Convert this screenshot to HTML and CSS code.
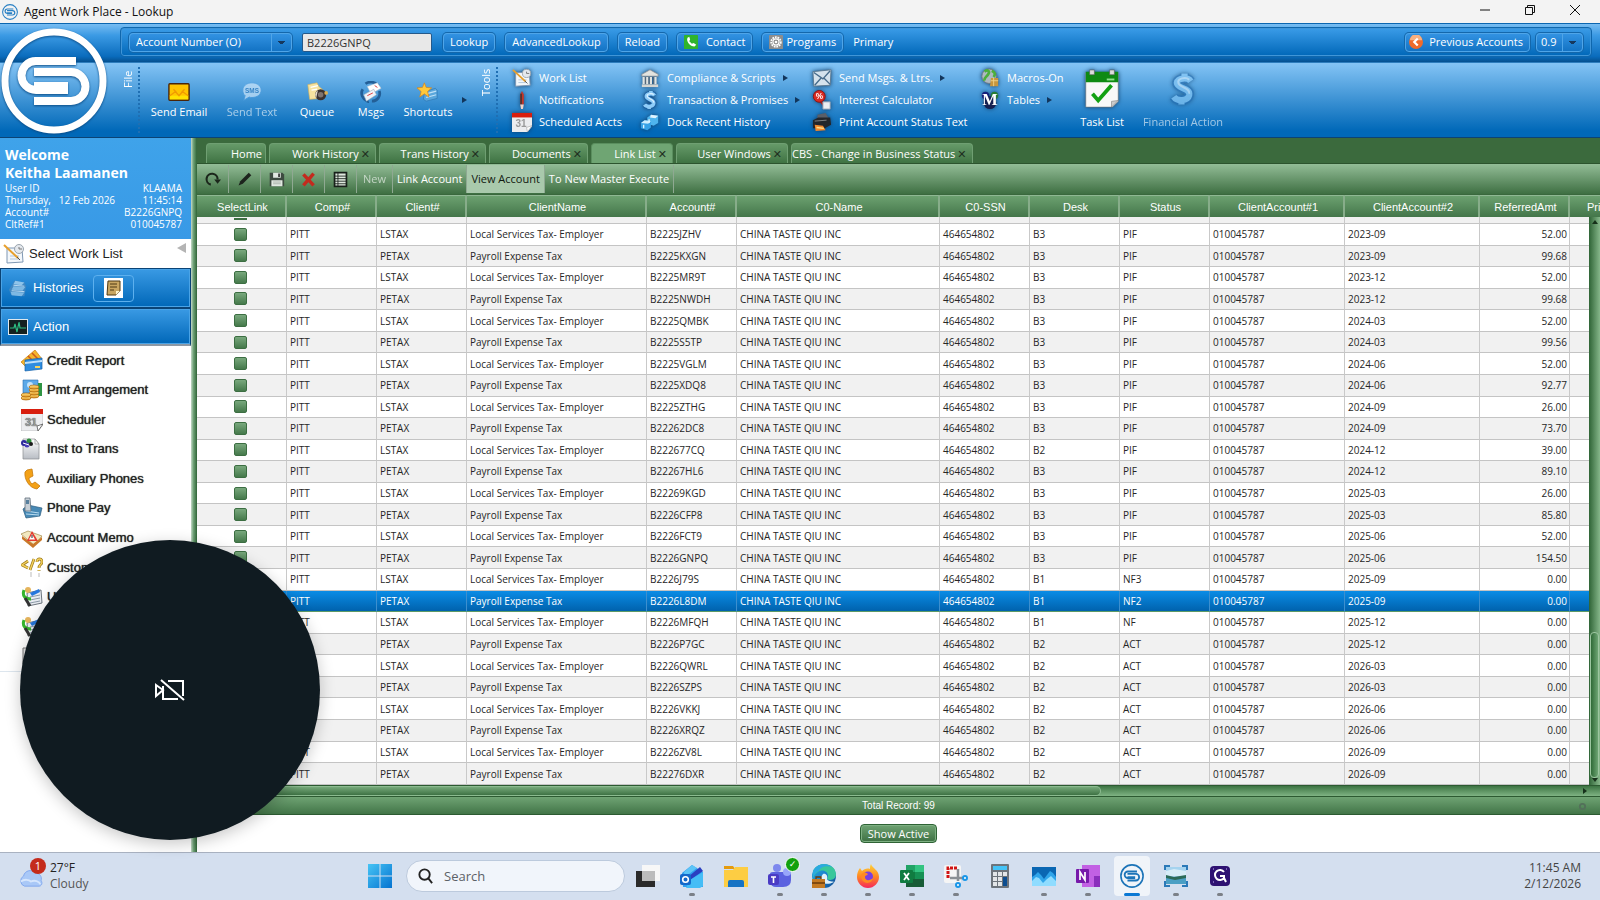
FILE: index.html
```html
<!DOCTYPE html>
<html lang="en">
<head>
<meta charset="utf-8">
<title>Agent Work Place - Lookup</title>
<link rel="stylesheet" href="styles.css">
</head>
<body>
<svg class="defs" aria-hidden="true">
  <defs>
    <linearGradient id="gWin" x1="0" y1="0" x2="1" y2="1"><stop offset="0" stop-color="#46c4f5"/><stop offset="1" stop-color="#0573d0"/></linearGradient>
    <linearGradient id="gGrey" x1="0" y1="0" x2="0" y2="1"><stop offset="0" stop-color="#fff"/><stop offset="1" stop-color="#b9bdc4"/></linearGradient>
    <linearGradient id="gEdge" x1="0" y1="0" x2="1" y2="1"><stop offset="0" stop-color="#2bb5d8"/><stop offset=".5" stop-color="#1a7fce"/><stop offset="1" stop-color="#114a8b"/></linearGradient>
    <linearGradient id="gFox" x1="0" y1="0" x2="0" y2="1"><stop offset="0" stop-color="#ffd43a"/><stop offset=".5" stop-color="#ff8a22"/><stop offset="1" stop-color="#f5275c"/></linearGradient>
    <linearGradient id="gGold" x1="0" y1="0" x2="0" y2="1"><stop offset="0" stop-color="#ffe287"/><stop offset="1" stop-color="#e3951c"/></linearGradient>
  </defs>
  <symbol id="swirl" viewBox="0 0 106 106">
    <circle cx="53" cy="53" r="49" fill="none" stroke="currentColor" stroke-width="7"/>
    <path d="M75 33H35a14 14 0 0 0 0 29h32M33 44h37a14 14 0 0 1 0 29H33M33 58h34" fill="none" stroke="currentColor" stroke-width="8"/>
  </symbol>
  <symbol id="mail" viewBox="0 0 24 20"><rect x="1" y="1" width="22" height="18" rx="1" fill="#ffc400" stroke="#4a2408" stroke-width="1.5"/><path d="M2 14h20v4H2z" fill="#ffe100"/><path d="M2 14l7-5M22 14l-7-5M6 7l6 7 6-7" fill="none" stroke="#f09a00" stroke-width="1.4"/></symbol>
  <symbol id="queue" viewBox="0 0 24 22"><path d="M2 3l10-2 2 4 5 4-3 9-12 1z" fill="#f6e3a0" stroke="#d6b25a" stroke-width=".7"/><path d="M5 6l8-2M6 9l6-1" stroke="#fff" stroke-width="1.500"/><circle cx="16" cy="14" r="6" fill="#3a3230"/><path d="M10 14a6 6 0 0 1 3-5l-2 9z" fill="#e6dccb"/><circle cx="16" cy="14" r="3" fill="#7e7470"/><circle cx="22" cy="12" r="2" fill="#dbaf54"/></symbol>
  <symbol id="msgs" viewBox="0 0 24 24"><path d="M6 3c4-3 10-2 13 1l-3 1M3 9c-3 5 0 11 5 13l-1-4M21 11c2 5-2 11-8 11" fill="none" stroke="#235f97" stroke-width="3"/><path d="M8 6l11-4 4 6-11 6z" fill="#fff" stroke="#b6c4d2" stroke-width=".6"/><path d="M4 15l11-6 3 6-11 7z" fill="#eef3f8" stroke="#93a6b8" stroke-width=".6"/><path d="M16 5l3 2M8 16l6-3" stroke="#d33" stroke-width="1"/></symbol>
  <symbol id="shortcuts" viewBox="0 0 24 22"><path d="M8 11l12-4 2 2v9l-12 3-3-2z" fill="#5aa7dc" stroke="#2f79b5" stroke-width=".8"/><path d="M10 13l11-3M10 17l11-3" stroke="#bfe1f7" stroke-width="1.4"/><path d="M8 1l2 5 6 .5-4.500 4 1.500 6L8 13l-5 3.500 1.500-6L0 6.500 6 6z" fill="#ffc93a" stroke="#d9861a" stroke-width=".8"/></symbol>
  <symbol id="worklist" viewBox="0 0 22 22"><path d="M4 5h15l1 14-16 1z" fill="#f3f7fb" stroke="#7e97b3"/><circle cx="16" cy="6" r="4.500" fill="#e4e8ed" stroke="#9aa4ae"/><path d="M16 4v2h3" stroke="#777" fill="none"/><path d="M7 13h9M7 16h9" stroke="#b3c6dc"/><path d="M1 2l14 13" stroke="#e8a02c" stroke-width="2"/><path d="M14 14l3 3" stroke="#555"/></symbol>
  <symbol id="pen" viewBox="0 0 22 22"><path d="M9 5l2-4 2 4v11H9z" fill="#c3352a"/><path d="M10 4v12" stroke="#333" stroke-width="1.500"/><path d="M9 16h4l-1 5h-2z" fill="#f2d3c9"/></symbol>
  <symbol id="bank" viewBox="0 0 22 22"><path d="M2 7l9-5 9 5v2H2z" fill="#e3e3df" stroke="#8b8f94" stroke-width=".8"/><path d="M4 10v8M8 10v8M12 10v8M17 10v8" stroke="#e3e3df" stroke-width="2.500"/><path d="M6 10v8M10 10v8M15 10v8" stroke="#5f6a76"/><path d="M2 18h18v3H2z" fill="#d6d6d2"/></symbol>
  <symbol id="dollar" viewBox="0 0 22 22"><path d="M16 6c-2-3-9-2-9 1 0 4 9 3 8 8-1 4-8 4-10 1M12 1v4M10 17v4" fill="none" stroke="#1d62a4" stroke-width="6"/><path d="M16 6c-2-3-9-2-9 1 0 4 9 3 8 8-1 4-8 4-10 1M12 1v4M10 17v4" fill="none" stroke="#8fcdf8" stroke-width="4"/><path d="M15 5c-2-2-8-1-7 2 0 3 8 3 7 7" fill="none" stroke="#dcf1ff" stroke-width="1.300"/></symbol>
  <symbol id="dock" viewBox="0 0 22 22"><path d="M8 6l4-3 8 1v8l-5 3-7-2z" fill="#4eb4ee"/><path d="M12 3l8 1-3 3-6-1z" fill="#dff4ff"/><path d="M1 12l4-3 7 1v7l-4 3-7-2z" fill="#37a2e6"/><path d="M5 9l7 1-3 3-8-1z" fill="#cceeff"/><path d="M10 8v4M4 14v4" stroke="#dff4ff" stroke-width="1.500"/></symbol>
  <symbol id="envelope" viewBox="0 0 22 22"><path d="M1 4l20-2-1 17-18 1z" fill="#d5e2ec" stroke="#5b7890"/><path d="M2 5l10 7 8-9M3 19l7-8M20 18l-7-7" fill="none" stroke="#476b8a" stroke-width="1.500"/></symbol>
  <symbol id="printer" viewBox="0 0 22 22"><path d="M6 3l9-2 4 7H6z" fill="#5a5f68"/><path d="M1 9l6-3h13l1 8-7 4H1z" fill="#23262b"/><path d="M3 10l13-1" stroke="#888"/><path d="M3 14l9 1 3 5-11 1z" fill="#f2882e"/><path d="M5 17l8 1" stroke="#ffe28a" stroke-width="1.500"/></symbol>
  <symbol id="globe" viewBox="0 0 22 22"><circle cx="10" cy="9" r="8" fill="#aeb9bf" stroke="#6d7b86"/><path d="M5 4c4-3 6 0 4 3s-5 4-4 7M13 3c4 2 4 4 2 7" fill="none" stroke="#4caf3c" stroke-width="3"/><path d="M12 11h8v9h-9z" fill="#c8963c"/><path d="M12 14h8M15 11v9" stroke="#f1d287"/></symbol>
  <symbol id="task" viewBox="0 0 38 42"><path d="M2 4h34v30l-6 6H2z" fill="#f8f8f8" stroke="#777" stroke-width=".6"/><path d="M2 3h34v11H2z" fill="#0e8a12"/><path d="M6 1h5v5H6zM27 1h5v5h-5z" fill="#ddd" stroke="#555" stroke-width=".6"/><path d="M24 11h8" stroke="#8fe08c" stroke-width="2"/><path d="M9 26l6 7 14-16" fill="none" stroke="#12a012" stroke-width="4"/><path d="M36 33l-7 7v-6z" fill="#ccc" stroke="#777" stroke-width=".6"/></symbol>
  <symbol id="phone" viewBox="0 0 16 16"><rect width="16" height="16" rx="1" fill="#2fb42c"/><path d="M4 3c-2 4 3 10 8 10l2-2-3-2-2 1-3-3 1-2-1-3z" fill="#fff"/></symbol>
  <symbol id="gear" viewBox="0 0 16 16"><rect width="16" height="16" rx="1" fill="#8d8d8d"/><circle cx="8" cy="8" r="5.500" fill="none" stroke="#fff" stroke-width="2" stroke-dasharray="2 1"/><circle cx="8" cy="8" r="3.500" fill="none" stroke="#fff" stroke-width="1.300"/><circle cx="8" cy="8" r="1.500" fill="#fff"/></symbol>
  <symbol id="prev" viewBox="0 0 16 16"><circle cx="8" cy="8" r="8" fill="#ef6a2a"/><path d="M1 6a7 7 0 0 1 14 0z" fill="#f8b080"/><path d="M10 4L6 8l4 4" fill="none" stroke="#fff" stroke-width="2.500"/></symbol>
  <symbol id="hist" viewBox="0 0 22 22"><path d="M7 3l11 2 2 4-2 11-14-1-3-6z" fill="#3f87c2"/><path d="M8 3l10 2-3 3-9-1z" fill="#8fc4ea"/><path d="M6 9l13 1-3 4-12-1zM3 15l15 1-3 4-11-1z" fill="#7db8e3"/><path d="M6 8l12 1M4 14l14 1" stroke="#c3e0f5"/></symbol>
  <symbol id="pulse" viewBox="0 0 20 16"><rect x=".5" y=".5" width="19" height="15" fill="#14211f" stroke="#dfe8ee"/><path d="M2 9h4l1-4 2 8 2-10 1 6h6" fill="none" stroke="#2dbd80" stroke-width="1.200"/></symbol>
  <symbol id="note" viewBox="0 0 19 20"><path d="M0 0h19v20H0z" fill="#fff"/><path d="M4 3h12v10l-4 4H3z" fill="#c9a661" stroke="#4d3815"/><path d="M6 6h7M6 9h7M6 12h4" stroke="#4d3815"/><path d="M16 13l-4 4v-4z" fill="#fff3cc"/></symbol>
  <symbol id="credit" viewBox="0 0 22 22"><path d="M0 12L14 0l7 9-14 10z" fill="#f5b52b" stroke="#c77b10" stroke-width=".7"/><path d="M7 6l8 8M11 3l9 9" stroke="#ca5a1c" stroke-width="1.500"/><path d="M4 10l17-2v11l-17 2z" fill="#2f8de0" stroke="#1863a9" stroke-width=".7"/><path d="M4 12l17-2v2l-17 2z" fill="#bfe0fa"/><path d="M14 16h5v2h-5z" fill="#f8d45e"/></symbol>
  <symbol id="coins" viewBox="0 0 22 22"><path d="M2 1h15v13H2z" fill="#5ca9e8" stroke="#2c6fb0" stroke-width=".6"/><path d="M17 4h4v13h-4z" fill="#2e9443"/><circle cx="9" cy="6" r="3" fill="#c4e3fa"/><g fill="url(#gGold)" stroke="#a8650f" stroke-width=".7"><ellipse cx="13" cy="17" rx="5" ry="2"/><ellipse cx="13" cy="14" rx="5" ry="2"/><ellipse cx="13" cy="11" rx="5" ry="2"/><ellipse cx="13" cy="8" rx="5" ry="2"/><ellipse cx="5" cy="19" rx="5" ry="2"/><ellipse cx="5" cy="16" rx="5" ry="2"/></g></symbol>
  <symbol id="inst" viewBox="0 0 22 22"><path d="M2 1h12l4 5v15H2z" fill="url(#gGrey)" stroke="#8a8d91" stroke-width=".7"/><path d="M14 1v5h4z" fill="#f7f7f7" stroke="#888" stroke-width=".6"/><circle cx="3" cy="5" r="3" fill="#2d2a9c"/><circle cx="8" cy="3" r="2.500" fill="#2f8d3d"/><circle cx="6" cy="7" r="2.500" fill="#473db8"/><circle cx="10" cy="6" r="2" fill="#1b1b1b"/><path d="M2 5l6 2" stroke="#fff"/></symbol>
  <symbol id="handset" viewBox="0 0 22 22"><path d="M4 4c-1 7 4 16 12 17l3-3-5-4-3 2c-2-2-3-4-3-6l4-2-1-7-5 1z" fill="#f3a117" stroke="#c77a0c" stroke-width=".8"/></symbol>
  <symbol id="pay" viewBox="0 0 22 22"><path d="M2 12l5-4 14 3-2 8-14 2z" fill="#4789b5" stroke="#2d5d80" stroke-width=".7"/><path d="M5 14l13 2M5 17l13 1" stroke="#b9dcf0"/><path d="M4 1h5l1 13H4z" fill="#c7cfd6" stroke="#62707c" stroke-width=".8"/><path d="M5 3h3v4H5z" fill="#58809e"/></symbol>
  <symbol id="memo" viewBox="0 0 22 22"><path d="M0 7l7-3 14 5-8 9z" fill="#f2e8c0" stroke="#a28a4b" stroke-width=".7"/><path d="M1 9l11 8 9-7v3l-9 8L1 12z" fill="#c9792a"/><path d="M11 4l6 10H6z" fill="#e53b30"/><path d="M11 7l3 5.500H8z" fill="#fff"/><path d="M11 8v3" stroke="#222"/></symbol>
  <symbol id="custom" viewBox="0 0 22 22"><path d="M7 4L1 8l6 3M13 2L9 13M16 5c0-4 5-4 5 0 0 3-3 2-3 6M18 13v1" fill="none" stroke="#9a7a1c" stroke-width="2.800"/><path d="M7 4L1 8l6 3M13 2L9 13M16 5c0-4 5-4 5 0 0 3-3 2-3 6M18 13v1" fill="none" stroke="#f3cf5b" stroke-width="1.400"/><path d="M10 15v5M18 16v4" stroke="#bbb"/></symbol>
  <symbol id="userwin" viewBox="0 0 22 22"><path d="M6 7l14-3 1 13-14 3z" fill="#e9edf2" stroke="#6e7780"/><path d="M9 11l10-2M9 14l10-2M9 17l10-2" stroke="#8c9aa8"/><circle cx="7" cy="4" r="3" fill="#e5b45c"/><path d="M9 7l9-4 1 3-8 4z" fill="#2577dd"/><path d="M3 4c-2 6 1 9 7 9" fill="none" stroke="#35b52d" stroke-width="3"/><path d="M4 12l5 8" stroke="#333" stroke-width="3"/></symbol>
  <symbol id="refresh" viewBox="0 0 20 20"><path d="M8 16a6.500 6.500 0 1 1 8-6" fill="none" stroke="#1b261b" stroke-width="2.500"/><path d="M12 10h8l-4 5z" fill="#1b261b"/></symbol>
  <symbol id="pencil" viewBox="0 0 20 20"><path d="M3 17l2-5L15 2l3 3L8 15z" fill="#1d241d"/></symbol>
  <symbol id="save" viewBox="0 0 20 20"><path d="M2 2h15l2 2v14H2z" fill="#3d4b40"/><path d="M6 2h9v6H6zM4 11h13v7H4z" fill="#e1e8e1"/><path d="M12 3h2v4h-2z" fill="#333"/><path d="M6 13h9M6 15h9" stroke="#a5aea5"/></symbol>
  <symbol id="del" viewBox="0 0 20 20"><path d="M4 4l12 13M16 3L4 17" stroke="#c42a1e" stroke-width="4"/></symbol>
  <symbol id="sheet" viewBox="0 0 20 20"><path d="M3 2h14v16H3z" fill="#dfe9df" stroke="#18201a" stroke-width="2"/><path d="M3 6h14M3 9h14M3 12h14M3 15h14M7 2v16" stroke="#18201a"/></symbol>
</svg>

<div class="app">
  <header class="titlebar">
    <svg class="title-logo"><use href="#swirl"/></svg>
    <h1>Agent Work Place - Lookup</h1>
    <div class="win-buttons">
      <button aria-label="Minimize"><svg viewBox="0 0 12 12"><path d="M1 6h10"/></svg></button>
      <button aria-label="Restore"><svg viewBox="0 0 12 12"><path d="M1.500 3.500h7v7h-7zM3.500 3V1.500H10.500v7H9"/></svg></button>
      <button aria-label="Close"><svg viewBox="0 0 12 12"><path d="M1 1l10 10M11 1L1 11"/></svg></button>
    </div>
  </header>

  <div class="top">
    <svg class="brand"><use href="#swirl"/></svg>
    <div class="lookup-row">
      <form class="lookup-bar" onsubmit="return false">
        <select class="kind" aria-label="Search field"><option>Account Number (O)</option></select>
        <input class="acct" aria-label="Account number" value="B2226GNPQ">
        <button class="pill">Lookup</button>
        <button class="pill">AdvancedLookup</button>
        <button class="pill">Reload</button>
        <button class="pill with-icon contact"><svg><use href="#phone"/></svg>Contact</button>
        <button class="pill with-icon"><svg><use href="#gear"/></svg>Programs</button>
        <span class="primary">Primary</span>
        <button class="pill with-icon prev"><svg><use href="#prev"/></svg>Previous Accounts</button>
        <select class="scale" aria-label="Scale"><option>0.9</option></select>
      </form>
    </div>
    <nav class="ribbon">
      <span class="group-name">File</span>
      <div class="big-items">
        <button class="w78"><svg><use href="#mail"/></svg>Send Email</button>
        <button class="w68 off"><svg viewBox="0 0 24 22"><path d="M12 1c6 0 10 3.500 10 8s-4 8-10 8c-1 0-2 0-3-.5L3 20l1.500-5C2.500 13.500 2 11 2 9c0-4.500 4-8 10-8z" fill="#e3f2ff" stroke="#4b9bdd"/><text class="sms" x="12" y="12">SMS</text></svg>Send Text</button>
        <button class="w60"><svg><use href="#queue"/></svg>Queue</button>
        <button class="w48"><svg><use href="#msgs"/></svg>Msgs</button>
        <button class="w68"><svg><use href="#shortcuts"/></svg>Shortcuts</button>
        <i class="arrow"></i>
      </div>
      <span class="group-name tools">Tools</span>
      <div class="tool-grid">
        <button><svg><use href="#worklist"/></svg>Work List</button>
        <button><svg><use href="#pen"/></svg>Notifications</button>
        <button><svg viewBox="0 0 22 22"><path d="M0 1h22v15l-5 6H0z" fill="#ecedef"/><path d="M0 1h22v5H0z" fill="#d81e0e"/><text class="day" x="10" y="17">31</text><path d="M22 15l-5 7-1-5z" fill="#fff" stroke="#999" stroke-width=".6"/></svg>Scheduled Accts</button>
        <button><svg><use href="#bank"/></svg>Compliance &amp; Scripts<i class="arrow"></i></button>
        <button><svg><use href="#dollar"/></svg>Transaction &amp; Promises<i class="arrow"></i></button>
        <button><svg><use href="#dock"/></svg>Dock Recent History</button>
        <button><svg><use href="#envelope"/></svg>Send Msgs. &amp; Ltrs.<i class="arrow"></i></button>
        <button><svg viewBox="0 0 22 22"><path d="M9 12l4 5" stroke="#b5221b" stroke-width="2"/><circle cx="8" cy="7" r="6.500" fill="#d92a22" stroke="#8c120e"/><text class="pct" x="8" y="10">%</text><path d="M12 13h8v8h-8z" fill="#eceff2" stroke="#8da0b3"/></svg>Interest Calculator</button>
        <button><svg><use href="#printer"/></svg>Print Account Status Text</button>
        <button><svg><use href="#globe"/></svg>Macros-On</button>
        <button><svg viewBox="0 0 22 22"><circle cx="6" cy="6" r="4" fill="#17207a"/><circle cx="16" cy="6" r="4" fill="#287c34"/><circle cx="11" cy="14" r="7" fill="#162051"/><text class="macro" x="11" y="17">M</text></svg>Tables<i class="arrow"></i></button>
      </div>
      <button class="large"><svg><use href="#task"/></svg>Task List</button>
      <button class="large off fin"><svg><use href="#dollar"/></svg>Financial Action</button>
    </nav>
  </div>

  <div class="body">
    <aside class="side">
      <section class="welcome">
        <h2>Welcome<br>Keitha Laamanen</h2>
        <div><span>User ID</span><span>KLAAMA</span></div>
        <div><span>Thursday, &nbsp; 12 Feb 2026</span><span>11:45:14</span></div>
        <div><span>Account#</span><span>B2226GNPQ</span></div>
        <div><span>CltRef#1</span><span>010045787</span></div>
      </section>
      <button class="select-list"><svg><use href="#worklist"/></svg>Select Work List<i></i></button>
      <div class="bar hist"><svg><use href="#hist"/></svg>Histories<button aria-label="Notes"><svg><use href="#note"/></svg></button></div>
      <div class="bar action"><svg><use href="#pulse"/></svg>Action</div>
      <nav class="actions">
        <a href="#"><svg><use href="#credit"/></svg>Credit Report</a>
        <a href="#"><svg><use href="#coins"/></svg>Pmt Arrangement</a>
        <a href="#"><svg viewBox="0 0 22 22"><path d="M0 0h22v16l-5 6H0z" fill="#ecedef" stroke="#aaa" stroke-width=".6"/><path d="M0 0h22v5H0z" fill="#d81e0e"/><text class="day" x="10" y="17">31</text><path d="M22 15l-5 7-1-5z" fill="#fff" stroke="#555" stroke-width=".8"/></svg>Scheduler</a>
        <a href="#"><svg><use href="#inst"/></svg>Inst to Trans</a>
        <a href="#"><svg><use href="#handset"/></svg>Auxiliary Phones</a>
        <a href="#"><svg><use href="#pay"/></svg>Phone Pay</a>
        <a href="#"><svg><use href="#memo"/></svg>Account Memo</a>
        <a href="#"><svg><use href="#custom"/></svg>Custom</a>
        <a href="#"><svg><use href="#userwin"/></svg>U</a>
        <a href="#" aria-label="User window"><svg><use href="#userwin"/></svg></a>
        <a href="#" aria-label="Documents"><svg viewBox="0 0 22 22"><path d="M2 3h9v16H2z" fill="#e4e4e4" stroke="#777"/></svg></a>
      </nav>
    </aside>
    <div class="splitter"></div>
    <main class="main">
      <div class="tabs">
        <button class="t-home">Home</button>
        <button class="t-work">Work History<b>✕</b></button>
        <button class="t-trans">Trans History<b>✕</b></button>
        <button class="t-docs">Documents<b>✕</b></button>
        <button class="t-link on">Link List<b>✕</b></button>
        <button class="t-user">User Windows<b>✕</b></button>
        <button class="t-cbs">CBS - Change in Business Status<b>✕</b></button>
      </div>
      <div class="toolbar">
        <button class="ic" aria-label="Refresh"><svg><use href="#refresh"/></svg></button>
        <button class="ic" aria-label="Edit"><svg><use href="#pencil"/></svg></button>
        <button class="ic" aria-label="Save"><svg><use href="#save"/></svg></button>
        <button class="ic" aria-label="Delete"><svg><use href="#del"/></svg></button>
        <button class="ic" aria-label="Grid"><svg><use href="#sheet"/></svg></button>
        <button class="new"><span class="off">New</span></button>
        <button>Link Account</button>
        <button class="on">View Account</button>
        <button>To New Master Execute</button>
      </div>
      <div class="grid-area">
        <table class="grid">
          <colgroup><col class="c90"><col class="c90"><col class="c90"><col class="c180"><col class="c90"><col class="c203"><col class="c90"><col class="c90"><col class="c90"><col class="c135"><col class="c135"><col class="c90"><col></colgroup>
          <thead><tr><th>SelectLink</th><th>Comp#</th><th>Client#</th><th>ClientName</th><th>Account#</th><th>C0-Name</th><th>C0-SSN</th><th>Desk</th><th>Status</th><th>ClientAccount#1</th><th>ClientAccount#2</th><th>ReferredAmt</th><th class="last">Pri</th></tr></thead>
          <tbody id="rows"></tbody>
        </table>
        <div class="vscroll"><i class="up"></i><div class="thumb"></div><i class="down"></i></div>
      </div>
      <div class="hscroll"><div class="thumb"></div><i></i></div>
      <div class="total">Total Record: 99<svg viewBox="0 0 10 10"><circle cx="5" cy="5" r="3"/></svg></div>
      <div class="foot"><button>Show Active</button></div>
    </main>
  </div>

  <footer class="taskbar">
    <div class="weather">
      <svg viewBox="0 0 28 26"><path d="M7 24a6 6 0 0 1-1-11c1-6 9-8 13-3 5 0 7 4 6 8 2 3 0 6-2 6z" fill="#a9c8f7" stroke="#7fa6ee"/><path d="M3 19c4-3 9-2 11 0 4-2 9 0 10 3" fill="none" stroke="#d6e6fd" stroke-width="2"/></svg>
      <b>1</b>
      <p>27°F<br><span>Cloudy</span></p>
    </div>
    <div class="apps">
      <button class="start" aria-label="Start"><svg viewBox="0 0 24 24"><path d="M0 0h11.500v11.500H0zM12.500 0H24v11.500H12.500zM0 12.500h11.500V24H0zM12.500 12.500H24V24H12.500z" fill="url(#gWin)"/></svg></button>
      <label class="search"><svg viewBox="0 0 18 18"><circle cx="8" cy="7" r="5.500"/><path d="M12 11l4 5"/></svg><input placeholder="Search" aria-label="Search"></label>
      <button aria-label="Task view"><svg viewBox="0 0 24 24"><path d="M0 7h19v16H0z" fill="#2a2a2a"/><path d="M6 1h18v16H6z" fill="#f7f7f7"/><path d="M6 7h13v10H6z" fill="#bcbcbc"/></svg></button>
      <button class="run" aria-label="Outlook"><svg viewBox="0 0 24 24"><path d="M2 9L12 1l11 7v15H3z" fill="#2f9ff0"/><path d="M4 8l8-7 5 3-12 9z" fill="#5cc4f7"/><path d="M8 13L20 3l3 4-13 9z" fill="#2a3fc0"/><path d="M10 16L23 8v14l-3 2H6z" fill="#45bdf6"/><rect y="10" width="11" height="11" rx="2" fill="#1468ca"/><circle cx="5.500" cy="15.500" r="2.800" fill="none" stroke="#fff" stroke-width="1.600"/></svg></button>
      <button aria-label="File Explorer"><svg viewBox="0 0 24 24"><path d="M0 2h9l2 3H0z" fill="#e59b0d"/><path d="M0 6h9l2-3h13v20H0z" fill="#fdcd43"/><path d="M4 23v-5q0-2 2-2h12q2 0 2 2v5z" fill="#1673c4"/></svg></button>
      <button class="run" aria-label="Teams"><svg viewBox="0 0 24 24"><circle cx="9" cy="4" r="4" fill="#7d88ee"/><path d="M2 10q0-2 3-2h15q3 0 3 3v5q0 7-8 7H8q-5 0-6-5z" fill="#5b62e0"/><circle cx="19" cy="8" r="4" fill="#98a6fa"/><rect y="10" width="11" height="11" rx="2" fill="#4a3bc4"/><path d="M3 13h5M5.500 13v6" stroke="#fff" stroke-width="1.600"/></svg><em>✓</em></button>
      <button class="run" aria-label="Edge"><svg viewBox="0 0 24 24"><circle cx="12" cy="12" r="12" fill="url(#gEdge)"/><path d="M1 8C4-3 23-2 24 10c0 6-6 7-9 5 3-5-2-10-7-8C4 8 2 12 1 14z" fill="#38c79b"/><path d="M1 8C3 0 14-2 20 3c-6-2-12 0-13 4-3 1-5 4-6 7z" fill="#2ba9e0"/><path d="M9 13c-1 6 5 9 13 5-1-1-6 0-7-3 1-3-1-6-4-5z" fill="#dff1fb"/><path d="M0 15h13v9H0z" fill="#c47a23"/><path d="M4 15v-2h5v2M0 19h13" fill="none" stroke="#6b3c0c" stroke-width="1.300"/></svg></button>
      <button class="run" aria-label="Firefox"><svg viewBox="0 0 24 24"><path d="M15 0c1 4 8 6 8 13 0 6-5 11-11 11S1 19 1 13c0-4 1-6 3-9l2 3c2-2 5-3 8-2 0-2 0-3 1-5z" fill="url(#gFox)"/><circle cx="12" cy="12.500" r="5" fill="#7a3fe0"/><path d="M5 11c3-4 5-2 7-1-1 2-3 1-3 3 0 4 5 4 8 1-1 7-12 7-12-3z" fill="#ff8a22"/></svg></button>
      <button class="run" aria-label="Excel"><svg viewBox="0 0 24 24"><path d="M6 1h9v7H6z" fill="#21a366"/><path d="M15 1h9v7h-9z" fill="#33c481"/><path d="M6 8h9v14H6z" fill="#107c41"/><path d="M15 8h9v7h-9z" fill="#169154"/><path d="M6 15h18v8H6z" fill="#185c37"/><rect y="6" width="13" height="13" rx="1" fill="#107c41"/><path d="M4 9l5 7M9 9l-5 7" stroke="#fff" stroke-width="1.800"/></svg></button>
      <button class="run" aria-label="Snipping Tool"><svg viewBox="0 0 24 24"><rect width="17" height="18" y="1" rx="2" fill="#f5f5f5"/><path d="M4 14V4h10" fill="none" stroke="#d11313" stroke-width="3" stroke-dasharray="3 1"/><path d="M14 5v12M6 14h14" stroke="#8a8f94" stroke-width="2.500"/><circle cx="21" cy="14" r="2" fill="#fff" stroke="#1996e8" stroke-width="2"/><circle cx="14" cy="21" r="2" fill="#fff" stroke="#1996e8" stroke-width="2"/></svg></button>
      <button aria-label="Calculator"><svg viewBox="0 0 24 24"><rect x="3" width="18" height="24" rx="1" fill="#6d747b"/><path d="M5 2h14v4H5z" fill="#45c3f7"/><path d="M5 8h4v4H5zM10 8h4v4h-4zM15 8h4v4h-4zM5 13h4v4H5zM10 13h4v4h-4zM5 18h4v4H5zM10 18h4v4h-4z" fill="#e3e6e8"/><path d="M15 13h4v9h-4z" fill="#0c4d8f"/></svg></button>
      <button class="run" aria-label="Monitor"><svg viewBox="0 0 24 24"><path d="M0 3h24v19H0z" fill="#0a67b3"/><path d="M0 13l3-2 3-3 3 3 3 4 3-4 3-4 3 2 3 4v9H0z" fill="#2fa5ea"/><path d="M0 17l4-4 3 1 4 5 4-4 4-3 5 5v5H0z" fill="#8fdcff"/></svg></button>
      <button class="run" aria-label="OneNote"><svg viewBox="0 0 24 24"><path d="M6 1h18v22H6z" fill="#c261e4"/><path d="M18 12h6v11h-6z" fill="#8a2fbc"/><rect y="5" width="13" height="14" rx="1" fill="#7719aa"/><path d="M4 16V8l5 8V8" fill="none" stroke="#fff" stroke-width="1.700"/></svg></button>
      <button class="current" aria-label="Agent Work Place"><svg><use href="#swirl"/></svg></button>
      <button class="run" aria-label="Photos"><svg viewBox="0 0 24 24"><path d="M2 3h20v17H2z" fill="#a5d3ef"/><path d="M2 7l8-2 12 2v5H2z" fill="#d7ecf7"/><path d="M2 11l8 2 12-2v5H2z" fill="#2c6a58"/><path d="M2 14l9 2 11-2v6H2z" fill="#4b9fc4"/><path d="M1 6V2h5M18 2h5v4M23 17v5h-5M6 22H1v-5" fill="none" stroke="#2b79b8" stroke-width="2"/></svg></button>
      <button class="run" aria-label="G app"><svg viewBox="0 0 24 24"><rect x="2" y="2" width="20" height="20" rx="4" fill="#2e1272"/><path d="M16 8a5 5 0 1 0 0 6v-2h-4M16 14l2 4" fill="none" stroke="#fff" stroke-width="2"/><path d="M5 5h1M18 5h1M5 18h1" stroke="#c9b6ff"/></svg></button>
    </div>
    <div class="clock">11:45 AM<br>2/12/2026</div>
  </footer>
</div>

<div class="camera" role="img" aria-label="Camera off">
  <svg viewBox="0 0 30 22"><path d="M1 6l7 5-7 6zM8 7v13h15M13 2h15v15M6 1l23 20"/></svg>
</div>
<script src="rows.js"></script>
</body>
</html>
```

FILE: rows.js
```js
const L = "LSTAX";
const P = "PETAX";
const names = { LSTAX: "Local Services Tax- Employer", PETAX: "Payroll Expense Tax" };
const data = [
  [L, "B2225JZHV", "B3", "PIF", "2023-09", "52.00"],
  [P, "B2225KXGN", "B3", "PIF", "2023-09", "99.68"],
  [L, "B2225MR9T", "B3", "PIF", "2023-12", "52.00"],
  [P, "B2225NWDH", "B3", "PIF", "2023-12", "99.68"],
  [L, "B2225QMBK", "B3", "PIF", "2024-03", "52.00"],
  [P, "B2225S5TP", "B3", "PIF", "2024-03", "99.56"],
  [L, "B2225VGLM", "B3", "PIF", "2024-06", "52.00"],
  [P, "B2225XDQ8", "B3", "PIF", "2024-06", "92.77"],
  [L, "B2225ZTHG", "B3", "PIF", "2024-09", "26.00"],
  [P, "B22262DC8", "B3", "PIF", "2024-09", "73.70"],
  [L, "B222677CQ", "B2", "PIF", "2024-12", "39.00"],
  [P, "B22267HL6", "B3", "PIF", "2024-12", "89.10"],
  [L, "B22269KGD", "B3", "PIF", "2025-03", "26.00"],
  [P, "B2226CFP8", "B3", "PIF", "2025-03", "85.80"],
  [L, "B2226FCT9", "B3", "PIF", "2025-06", "52.00"],
  [P, "B2226GNPQ", "B3", "PIF", "2025-06", "154.50"],
  [L, "B2226J79S", "B1", "NF3", "2025-09", "0.00"],
  [P, "B2226L8DM", "B1", "NF2", "2025-09", "0.00"],
  [L, "B2226MFQH", "B1", "NF", "2025-12", "0.00"],
  [P, "B2226P7GC", "B2", "ACT", "2025-12", "0.00"],
  [L, "B2226QWRL", "B2", "ACT", "2026-03", "0.00"],
  [P, "B2226SZPS", "B2", "ACT", "2026-03", "0.00"],
  [L, "B2226VKKJ", "B2", "ACT", "2026-06", "0.00"],
  [P, "B2226XRQZ", "B2", "ACT", "2026-06", "0.00"],
  [L, "B2226ZV8L", "B2", "ACT", "2026-09", "0.00"],
  [P, "B22276DXR", "B2", "ACT", "2026-09", "0.00"]
];
const body = document.getElementById("rows");
body.innerHTML = `<tr class="sliver"><td><i></i></td>${"<td></td>".repeat(12)}</tr>` +
  data.map(([client, acct, desk, status, period, amount]) => {
    const cells = ["PITT", client, names[client], acct, "CHINA TASTE QIU INC", "464654802", desk, status, "010045787", period];
    const cls = acct === "B2226L8DM" ? ' class="selected"' : "";
    return `<tr${cls}><td><input type="checkbox" aria-label="Select ${acct}"></td>` +
      cells.map((c) => `<td>${c}</td>`).join("") + `<td class="num">${amount}</td><td></td></tr>`;
  }).join("");
```

FILE: styles.css
```css
:root {
  --ui: "Open Sans", "Noto Sans", sans-serif;
  --arial: "Liberation Sans", Arial, sans-serif;
}
* { box-sizing: border-box; }
body { margin: 0; font: 11px/14px var(--ui); color: #fff; background: #fff; overflow: hidden; }
button, input, select { font: inherit; color: inherit; margin: 0; }
button { background: none; border: 0; padding: 0; white-space: nowrap; }
a { color: inherit; text-decoration: none; }
.defs { position: absolute; width: 0; height: 0; }
.app { display: flex; flex-direction: column; height: 100vh; }

/* Title bar */
.titlebar { display: flex; align-items: center; height: 23px; background: #f3f3f3; color: #111; padding-left: 2px; }
.titlebar h1 { margin: 0 0 0 6px; font: 12px/16px var(--ui); }
.title-logo { width: 16px; height: 16px; color: #2a80c4; }
.win-buttons { margin-left: auto; display: flex; padding-right: 3px; }
.win-buttons button { width: 45px; height: 20px; }
.win-buttons svg { width: 12px; height: 12px; fill: none; stroke: #111; }

/* Header */
.top { position: relative; }
.brand { position: absolute; left: 1px; top: 5px; width: 106px; height: 106px; color: #fff; z-index: 1; filter: drop-shadow(0 1px 1px #0b4c86); }
.lookup-row { height: 39px; padding: 3px 8px 5px 120px; border-top: 1px solid #0b66b0; background: linear-gradient(#78bdf2, #3b9ae4 30%, #0a6cbd 85%, #05508f); }
.lookup-bar { display: flex; align-items: center; height: 30px; padding: 0 8px; border: 1px solid #0f67ad; border-radius: 4px; box-shadow: inset 0 0 0 1px #3f95d8; background: linear-gradient(#3b9ce8, #0067b8); }
.kind, .scale, .pill { height: 19px; border: 1px solid #4fa5e8; border-radius: 4px; box-shadow: 0 0 0 1px #1467ab; background: linear-gradient(#3292e2, #1373c4); }
.kind, .scale { appearance: none; padding: 0 6px; background-image: linear-gradient(#16385e, #16385e), linear-gradient(#16385e, #16385e), linear-gradient(#16385e, #16385e), linear-gradient(#4fa5e8, #4fa5e8), linear-gradient(#3292e2, #1373c4); background-size: 7px 1px, 5px 1px, 3px 1px, 1px 100%, auto; background-position: right 6px top 7px, right 7px top 8px, right 8px top 9px, right 19px top 0, 0 0; background-repeat: no-repeat; }
.kind { width: 163px; }
.scale { width: 47px; margin-left: 6px; padding: 0 4px; }
.acct { width: 130px; height: 19px; margin: 0 11px 0 10px; padding: 0 4px; border: 1px solid #24598a; border-radius: 2px; background: #e8e8e8; color: #333; }
.pill { padding: 0 6px; margin-right: 10px; line-height: 16px; }
.with-icon { display: flex; align-items: center; gap: 3px; padding-left: 6px; }
.with-icon svg { width: 14px; height: 14px; }
.contact { gap: 8px; }
.prev { margin: 0 0 0 auto; gap: 6px; padding-left: 3px; }

.ribbon { display: flex; height: 76px; padding-left: 120px; border-top: 1px solid #2d7dbd; border-bottom: 1px solid #0b4375; background: linear-gradient(#84c4f5, #0068b8 92%); }
.group-name { writing-mode: vertical-rl; transform: rotate(180deg); width: 20px; padding: 0 0 4px 3px; margin: 4px 0; text-align: right; border-left: 2px dotted #1f6fb3; line-height: 15px; }
.tools { margin-left: 11px; padding-bottom: 2px; }
.big-items { display: flex; align-items: center; }
.big-items button { display: flex; flex-direction: column; align-items: center; gap: 2px; }
.big-items svg { width: 22px; height: 22px; }
.sms, .day, .pct, .macro { text-anchor: middle; font-family: var(--arial); font-weight: 700; font-size: 7px; fill: #2673b8; }
.day { font-size: 11px; fill: #9a9a9a; }
.pct { font-size: 9px; fill: #fff; }
.macro { font-family: "Liberation Serif", serif; font-size: 18px; fill: #fff; }
.w78 { width: 78px; }
.w68 { width: 68px; }
.w60 { width: 62px; }
.w48 { width: 46px; }
.off { opacity: .6; }
.arrow { border-left: 5px solid #12365c; border-top: 3px solid transparent; border-bottom: 3px solid transparent; }
.tool-grid { display: grid; grid-auto-flow: column; grid-template-rows: repeat(3, 22px); grid-template-columns: 128px 172px 168px 105px; align-content: center; padding-left: 10px; }
.tool-grid button { display: flex; align-items: center; gap: 7px; }
.tool-grid svg { width: 20px; height: 20px; margin-left: 4px; filter: drop-shadow(0 0 2px #12426e); flex: none; }
.large { display: flex; flex-direction: column; align-items: center; gap: 6px; padding-top: 6px; width: 42px; }
.large svg { width: 38px; height: 40px; filter: drop-shadow(0 0 2px #12426e); }
.fin { width: 76px; margin-left: 22px; }
.fin svg { width: 34px; padding: 2px 0; }

/* Sidebar */
.body { display: flex; flex: 1; min-height: 0; }
.side { width: 191px; background: #fff; flex: none; overflow: hidden; font-family: var(--arial); }
.welcome { height: 101px; padding: 8px 9px 0 5px; background: linear-gradient(#3fa3ea, #3899e6); font: 10px/12px var(--ui); }
.welcome h2 { margin: 0; font: bold 14px/18px var(--ui); }
.welcome div { display: flex; justify-content: space-between; }
.select-list { display: flex; align-items: center; width: 100%; height: 29px; padding-left: 3px; gap: 4px; font: 13px/16px var(--arial); color: #222; }
.select-list svg { width: 22px; height: 22px; }
.select-list i { margin: 0 5px 12px auto; border-right: 9px solid #b4b4b4; border-top: 5px solid transparent; border-bottom: 5px solid transparent; }
.bar { display: flex; align-items: center; gap: 5px; height: 40px; padding-left: 7px; font: 13px/16px var(--arial); border: 1px solid #0b4375; box-shadow: inset 0 0 0 1px #4aa3e6; background: linear-gradient(#3a9ae4, #0067b8); }
.bar > svg { width: 20px; height: 20px; }
.bar button { width: 41px; height: 27px; margin-left: 4px; border: 1px solid #5db0ee; border-radius: 4px; }
.bar button svg { width: 19px; height: 20px; display: block; margin: auto; }
.action { height: 38px; border-bottom: 2px solid #8d99a5; }
.actions { display: grid; grid-auto-rows: 1fr; height: 326px; border-bottom: 1px solid #dde6ee; color: #222; font: 13px/16px var(--arial); text-shadow: 0 0 1px #222; }
.actions a { display: flex; align-items: center; gap: 4px; padding-left: 21px; }
.actions svg { width: 22px; height: 22px; }
.splitter { width: 6px; flex: none; background: linear-gradient(90deg, #c5d9c8, #6fa277 40%, #2f6336); }

/* Work area */
.main { flex: 1; min-width: 0; display: flex; flex-direction: column; background: #fff; }
.tabs { display: flex; align-items: flex-end; gap: 3px; height: 26px; padding-left: 9px; background: #3b6a3d; border-bottom: 1px solid #2c542e; }
.tabs button { height: 20px; padding-right: 5px; text-align: right; border: 1px solid #6f9f72; border-bottom: 0; border-radius: 4px 4px 0 0; background: linear-gradient(#669a69, #3f7343); }
.tabs b { font: 11px/12px "DejaVu Sans", sans-serif; color: #1f2f20; margin-left: 2px; }
.tabs .on { background: #6fa573; border-color: #5a8e5e; }
.tabs .t-home { width: 60px; padding-right: 3px; }
.t-work, .t-trans { width: 107px; }
.t-docs { width: 99px; }
.t-link { width: 82px; }
.t-user { width: 112px; }
.toolbar { display: flex; height: 31px; padding: 1px 0; background: linear-gradient(#93bd97, #3e6f42); border-bottom: 1px solid #3a683d; }
.toolbar button { padding: 0 4px; border-right: 1px solid #8fa992; }
.toolbar .new { padding: 0 6px; }
.toolbar .ic { width: 32px; padding: 0; }
.toolbar svg { width: 17px; height: 17px; display: block; margin: auto; }
.toolbar .on { background: #a9c9ac; color: #10180f; }
.grid-area { flex: 1; min-height: 0; position: relative; overflow: hidden; }
.grid { width: 100%; height: 100%; table-layout: fixed; border-collapse: separate; border-spacing: 0; color: #262626; font: 10px/14px var(--ui); }
.c90 { width: 90px; }
.c135 { width: 135px; }
.c180 { width: 180px; }
.c203 { width: 203px; }
.grid th { height: 22px; padding: 0 0 0 3px; font: 11px/14px var(--arial); color: #fff; border-top: 1px solid #8fb893; border-right: 2px solid #87ad8a; background: linear-gradient(#6ca170, #44764a); white-space: nowrap; }
.grid .last { text-align: left; padding-left: 17px; overflow: hidden; border-right: 0; }
.grid td { padding: 0 3px; border-right: 1px solid #c9c9c9; border-bottom: 1px solid #c4c4c4; white-space: nowrap; overflow: hidden; }
.grid td:first-child { padding-right: 5px; }
.grid .num { text-align: right; padding-right: 2px; }
.grid tr:nth-child(odd) td { background: #f1f1f1; }
.grid .sliver td { height: 7px; }
.sliver i { display: block; width: 13px; height: 2px; margin: 0 auto 3px; background: #3c6e42; }
.grid input { appearance: none; display: block; width: 13px; height: 13px; margin: 0 auto; border: 1px solid #3c6e42; border-radius: 2px; background: linear-gradient(#79a87d, #45794b); }
.grid .selected td, .grid tr.selected:nth-child(odd) td { background: linear-gradient(#0a8ce6, #0062ad); color: #fff; border-bottom-color: #5e9a66; border-right-color: #3d8fce; }
.vscroll { position: absolute; right: 0; top: 22px; bottom: 0; width: 11px; display: flex; flex-direction: column; justify-content: space-between; align-items: center; padding: 3px 1px; background: linear-gradient(90deg, #2f6436, #86b78a); }
.vscroll i { border-left: 3px solid transparent; border-right: 3px solid transparent; }
.up { border-bottom: 4px solid #16301a; }
.down { border-top: 4px solid #16301a; }
.vscroll .thumb { width: 9px; height: 146px; margin-top: auto; border: 1px solid #9cc6a0; border-radius: 4px; background: linear-gradient(90deg, #2f6a37, #6da573); }
.hscroll { display: flex; align-items: center; justify-content: space-between; height: 11px; padding-right: 13px; border-top: 1px solid #2c5a31; background: linear-gradient(#3c7442, #7fb383); }
.hscroll .thumb { width: 65%; height: 10px; border: 1px solid #8cbb90; border-left: 0; border-radius: 0 5px 5px 0; background: linear-gradient(#76a97a, #3e7244); }
.hscroll i { border-left: 4px solid #16301a; border-top: 3px solid transparent; border-bottom: 3px solid transparent; }
.total { position: relative; height: 19px; text-align: center; font: 10px/17px var(--arial); border-top: 1px solid #2c5a31; border-bottom: 1px solid #2c5a31; background: linear-gradient(#6fa373, #427548); }
.total svg { position: absolute; right: 13px; top: 5px; width: 9px; height: 9px; fill: none; stroke: #53705a; stroke-width: 2; }
.foot { display: flex; justify-content: center; align-items: center; height: 37px; }
.foot button { height: 19px; padding: 0 7px; border: 1px solid #2e6335; border-radius: 4px; box-shadow: inset 0 0 0 1px #7eb083; background: linear-gradient(#6fa373, #3d7043); }

/* Taskbar */
.taskbar { display: grid; grid-template-columns: 1fr auto 1fr; align-items: center; height: 48px; padding-bottom: 1px; border-top: 1px solid #a9b2c1; background: #d4dfef; color: #333; font: 12px/16px var(--ui); }
.weather { position: relative; display: flex; align-items: center; gap: 6px; padding-left: 18px; color: #222; }
.weather svg { width: 26px; height: 24px; }
.weather b { position: absolute; left: 30px; top: -2px; width: 16px; height: 16px; border-radius: 50%; background: #c42b1c; color: #fff; font: 11px/16px var(--ui); text-align: center; }
.weather p { margin: 0; }
.weather span { color: #555; }
.apps { display: flex; align-items: center; padding-left: 3px; }
.apps button { position: relative; width: 44px; height: 40px; }
.apps button svg { width: 24px; height: 24px; display: block; margin: auto; }
.apps .start { width: 38px; margin-right: 7px; }
.search { display: flex; align-items: center; width: 219px; height: 32px; margin-right: 1px; padding-left: 10px; gap: 8px; border: 1px solid #bccadd; border-radius: 16px; background: #f1f5fb; }
.search svg { width: 17px; height: 17px; fill: none; stroke: #222; stroke-width: 2; }
.search input { width: 150px; border: 0; background: none; font: 13px/18px var(--ui); }
.search input::placeholder { color: #5c6167; opacity: 1; }
.run::after, .current::after { content: ""; position: absolute; left: 19px; bottom: 0; width: 6px; height: 3px; border-radius: 2px; background: #7b8087; }
.apps .current { color: #1c74b8; background: #f0f4f9; border-radius: 4px; width: 36px; margin: 0 4px; }
.apps .current::after { left: 10px; width: 16px; background: #0a78d4; }
.apps em { position: absolute; right: 2px; top: 1px; width: 15px; height: 15px; border: 1px solid #fff; border-radius: 50%; background: #13a10e; color: #fff; font: bold 9px/13px "DejaVu Sans", sans-serif; }
.clock { text-align: right; padding-right: 19px; color: #444; }

/* Floating camera bubble */
.camera { position: fixed; left: 20px; bottom: 60px; width: 300px; height: 300px; border-radius: 50%; background: #101b21; display: flex; align-items: center; justify-content: center; box-shadow: 0 4px 16px rgba(0, 0, 0, .22); z-index: 5; }
.camera svg { width: 30px; height: 22px; fill: none; stroke: #fff; stroke-width: 2; }
```
